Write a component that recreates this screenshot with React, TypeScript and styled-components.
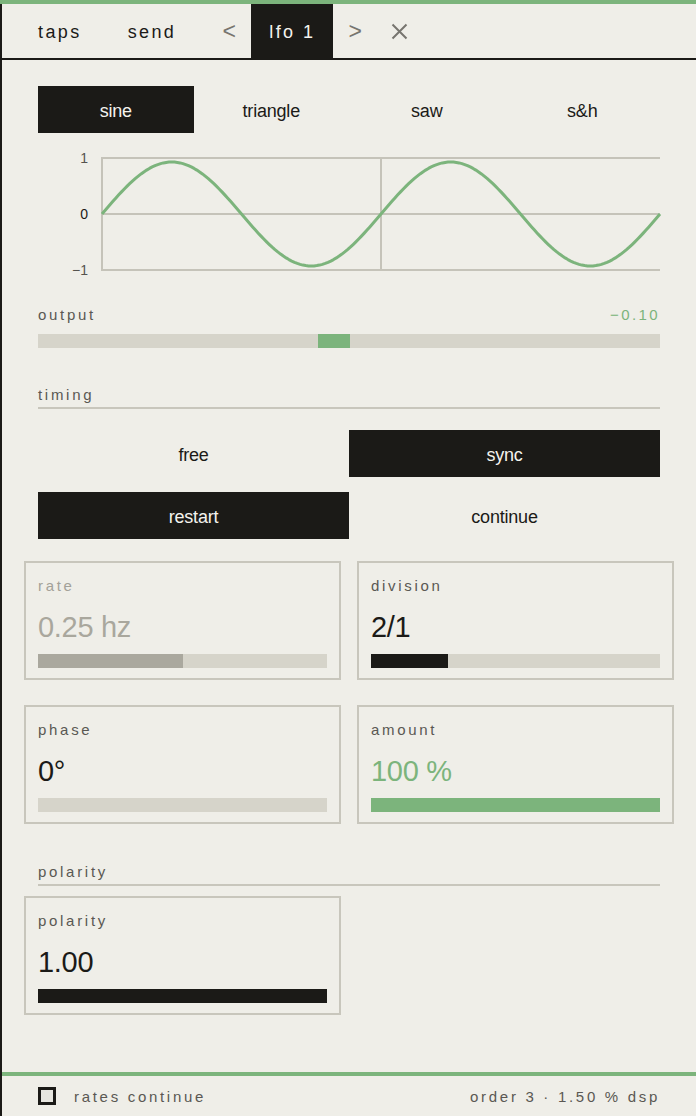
import React from 'react';
import styled, { createGlobalStyle } from 'styled-components';

const GlobalStyle = createGlobalStyle`
  html, body {
    margin: 0;
    padding: 0;
    background: #efeee8;
  }
  * { box-sizing: border-box; }
`;

const green = '#7cb47c';
const ink = '#1b1a17';
const muted = '#5a5853';
const line = '#c8c6bc';
const track = '#d6d4ca';

const Frame = styled.div`
  height: 100vh;
  display: flex;
  flex-direction: column;
  border-top: 4px solid ${green};
  font-family: "Liberation Sans", Arial, sans-serif;
  color: ${ink};
`;

const Body = styled.div`
  flex: 1;
  display: flex;
  flex-direction: column;
  border-left: 2px solid ${ink};
`;

const Header = styled.div`
  height: 56px;
  display: flex;
  align-items: stretch;
  padding-left: 18px;
  border-bottom: 2px solid ${ink};
`;

const Tab = styled.div<{ $active?: boolean; $gap?: number }>`
  display: flex;
  align-items: center;
  padding: 2px 18px 0;
  margin-left: ${p => p.$gap || 0}px;
  font-size: 18px;
  letter-spacing: 2.4px;
  background: ${p => (p.$active ? ink : 'transparent')};
  color: ${p => (p.$active ? '#f4f3ee' : ink)};
`;

const NavButton = styled.div<{ $gap?: number }>`
  width: 44px;
  display: flex;
  align-items: center;
  justify-content: center;
  margin-left: ${p => p.$gap || 0}px;
  font-size: 23px;
  color: #77756f;
`;

const Main = styled.div`
  flex: 1;
  padding: 26px 36px 0;
  display: flex;
  flex-direction: column;
`;

const Segmented = styled.div`
  display: grid;
  grid-template-columns: repeat(var(--cols), 1fr);
`;

const SegButton = styled.div<{ $active?: boolean }>`
  height: 47px;
  padding-top: 3px;
  display: flex;
  align-items: center;
  justify-content: center;
  font-size: 18px;
  letter-spacing: -0.2px;
  background: ${p => (p.$active ? ink : 'transparent')};
  color: ${p => (p.$active ? '#f4f3ee' : ink)};
`;

const Chart = styled.svg`
  display: block;
  margin-top: 17px;
  overflow: visible;
`;

const LabelRow = styled.div<{ $top: number }>`
  display: flex;
  justify-content: space-between;
  margin-top: ${p => p.$top}px;
  font-size: 15px;
  line-height: 18px;
  letter-spacing: 2.7px;
  color: ${muted};
`;

const Value = styled.span`
  color: ${green};
  letter-spacing: 2.4px;
`;

const OutputTrack = styled.div`
  position: relative;
  height: 14px;
  margin-top: 10px;
  background: ${track};
`;

const OutputMarker = styled.div`
  position: absolute;
  top: 0;
  bottom: 0;
  width: 32px;
  background: ${green};
`;

const SectionTitle = styled.div<{ $top: number }>`
  margin-top: ${p => p.$top}px;
  padding-bottom: 3px;
  border-bottom: 2px solid ${line};
  font-size: 15px;
  line-height: 18px;
  letter-spacing: 2.7px;
  color: ${muted};
`;

const ButtonRows = styled.div`
  margin-top: 21px;
  display: flex;
  flex-direction: column;
  gap: 15px;
`;

const CardGrid = styled.div<{ $top: number }>`
  margin: ${p => p.$top}px -14px 0 -14px;
  display: grid;
  grid-template-columns: 1fr 1fr;
  column-gap: 16px;
  row-gap: 25px;
`;

const Card = styled.div`
  border: 2px solid ${line};
  padding: 14px 12px 10px;
`;

const CardLabel = styled.div<{ $dim?: boolean }>`
  font-size: 15px;
  line-height: 18px;
  letter-spacing: 2.7px;
  color: ${p => (p.$dim ? '#a3a198' : muted)};
`;

const CardValue = styled.div<{ $tone: 'ink' | 'dim' | 'green' }>`
  margin-top: 16px;
  font-size: 29px;
  line-height: 32px;
  letter-spacing: -0.3px;
  color: ${p => (p.$tone === 'green' ? green : p.$tone === 'dim' ? '#a9a79d' : ink)};
`;

const Bar = styled.div`
  margin-top: 11px;
  height: 14px;
  background: ${track};
  display: flex;
`;

const BarFill = styled.div<{ $color: string }>`
  height: 100%;
  background: ${p => p.$color};
`;

const Footer = styled.div`
  height: 44px;
  border-top: 4px solid ${green};
  display: flex;
  align-items: center;
  justify-content: space-between;
  padding: 0 36px;
  font-size: 15px;
  letter-spacing: 2.7px;
  color: ${muted};
`;

const Check = styled.div`
  display: flex;
  align-items: center;
  gap: 18px;
`;

const Box = styled.span`
  width: 18px;
  height: 18px;
  border: 3px solid ${ink};
  background: #e6e5df;
`;

const wavePath = (() => {
  const x0 = 64;
  const x1 = 622;
  const mid = 64;
  const amp = 52;
  const pts: string[] = [];
  for (let i = 0; i <= 200; i++) {
    const t = i / 200;
    const x = x0 + (x1 - x0) * t;
    const y = mid - amp * Math.sin(t * Math.PI * 4);
    pts.push(`${i === 0 ? 'M' : 'L'}${x.toFixed(2)} ${y.toFixed(2)}`);
  }
  return pts.join(' ');
})();

const Wave = () => (
  <Chart width="622" height="128" viewBox="0 0 622 128">
    <g stroke="#c5c3b9" strokeWidth="2" fill="none">
      <line x1="64" y1="8" x2="622" y2="8" />
      <line x1="64" y1="64" x2="622" y2="64" />
      <line x1="64" y1="120" x2="622" y2="120" />
      <line x1="64" y1="7" x2="64" y2="121" />
      <line x1="343" y1="8" x2="343" y2="120" />
    </g>
    <path d={wavePath} stroke={green} strokeWidth="3" fill="none" strokeLinejoin="round" />
    <g fontFamily="Liberation Sans, Arial, sans-serif" fontSize="14" textAnchor="end">
      <text x="50" y="13" fill="#55534e">1</text>
      <text x="50" y="69" fill={ink}>0</text>
      <text x="50" y="125" fill="#55534e">−1</text>
    </g>
  </Chart>
);

type CardProps = {
  label: string;
  value: string;
  tone: 'ink' | 'dim' | 'green';
  fill: number;
  color: string;
};

const ParamCard = ({ label, value, tone, fill, color }: CardProps) => (
  <Card>
    <CardLabel $dim={tone === 'dim'}>{label}</CardLabel>
    <CardValue $tone={tone}>{value}</CardValue>
    <Bar>
      {fill > 0 && <BarFill $color={color} style={{ width: `${fill * 100}%` }} />}
    </Bar>
  </Card>
);

const App = () => {
  const waves = ['sine', 'triangle', 'saw', 's&h'];

  return (
    <>
      <GlobalStyle />
      <Frame>
        <Body>
          <Header>
            <Tab>taps</Tab>
            <Tab $gap={10}>send</Tab>
            <NavButton $gap={13}>&lt;</NavButton>
            <Tab $active>lfo 1</Tab>
            <NavButton>&gt;</NavButton>
            <NavButton>
              <svg width="17" height="17" viewBox="0 0 17 17">
                <path d="M1.5 1.5 L15.5 15.5 M15.5 1.5 L1.5 15.5" stroke="#77756f" strokeWidth="2" />
              </svg>
            </NavButton>
          </Header>

          <Main>
            <Segmented style={{ ['--cols' as string]: 4 }}>
              {waves.map(w => (
                <SegButton key={w} $active={w === 'sine'}>{w}</SegButton>
              ))}
            </Segmented>

            <Wave />

            <LabelRow $top={28}>
              <span>output</span>
              <Value>−0.10</Value>
            </LabelRow>
            <OutputTrack>
              <OutputMarker style={{ left: '45%' }} />
            </OutputTrack>

            <SectionTitle $top={38}>timing</SectionTitle>

            <ButtonRows>
              <Segmented style={{ ['--cols' as string]: 2 }}>
                <SegButton>free</SegButton>
                <SegButton $active>sync</SegButton>
              </Segmented>
              <Segmented style={{ ['--cols' as string]: 2 }}>
                <SegButton $active>restart</SegButton>
                <SegButton>continue</SegButton>
              </Segmented>
            </ButtonRows>

            <CardGrid $top={22}>
              <ParamCard label="rate" value="0.25 hz" tone="dim" fill={0.5} color="#aaa89e" />
              <ParamCard label="division" value="2/1" tone="ink" fill={0.265} color={ink} />
              <ParamCard label="phase" value="0°" tone="ink" fill={0} color={ink} />
              <ParamCard label="amount" value="100 %" tone="green" fill={1} color={green} />
            </CardGrid>

            <SectionTitle $top={39}>polarity</SectionTitle>

            <CardGrid $top={10}>
              <ParamCard label="polarity" value="1.00" tone="ink" fill={1} color={ink} />
            </CardGrid>
          </Main>

          <Footer>
            <Check>
              <Box />
              <span>rates continue</span>
            </Check>
            <span>order 3 · 1.50 % dsp</span>
          </Footer>
        </Body>
      </Frame>
    </>
  );
};

export default App;
